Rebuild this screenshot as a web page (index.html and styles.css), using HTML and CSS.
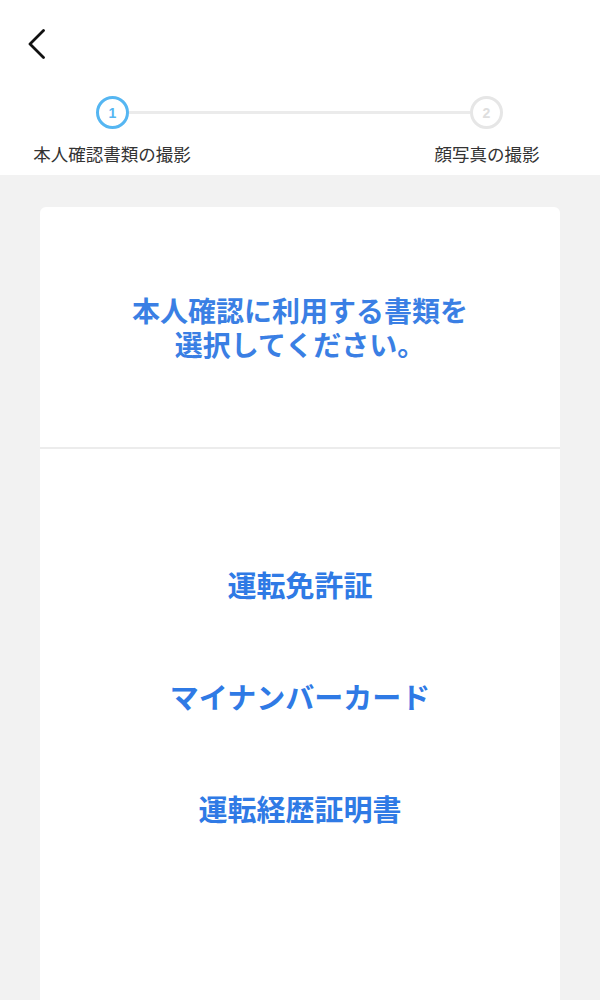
FILE: index.html
```html
<!DOCTYPE html>
<html lang="ja">
<head>
<meta charset="utf-8">
<title>本人確認書類の選択</title>
<link rel="stylesheet" href="styles.css">
</head>
<body>
<header class="header">
  <div class="back">
    <svg width="18" height="30" viewBox="0 0 18 30" aria-hidden="true">
      <polyline points="15.5,1.5 2,15 15.5,28.5" fill="none" stroke="#111" stroke-width="2.8" stroke-linecap="round" stroke-linejoin="round"/>
    </svg>
  </div>
  <div class="stepper">
    <div class="circle active">1</div>
    <div class="line"></div>
    <div class="circle">2</div>
  </div>
  <div class="labels">
    <span class="label">本人確認書類の撮影</span>
    <span class="label">顔写真の撮影</span>
  </div>
</header>
<main class="content">
  <section class="card">
    <div class="card-head">
      <h1 class="title"><span class="title-line">本人確認に利用する書類を</span><span class="title-line">選択してください。</span></h1>
    </div>
    <ul class="options">
      <li class="option">運転免許証</li>
      <li class="option">マイナンバーカード</li>
      <li class="option">運転経歴証明書</li>
    </ul>
  </section>
</main>
</body>
</html>
```

FILE: styles.css
```css
* { box-sizing: border-box; }
html, body {
  margin: 0;
  padding: 0;
  background: #f2f2f2;
  font-family: "Noto Sans CJK JP", "Noto Sans", sans-serif;
}
.header {
  background: #ffffff;
  height: 175px;
  padding-top: 29px;
}
.back {
  padding-left: 28px;
  height: 30px;
  display: flex;
  align-items: center;
}
.back svg { display: block; }
.stepper {
  display: flex;
  align-items: center;
  padding: 0 97px 0 96px;
  margin-top: 37px;
}
.circle {
  width: 33px;
  height: 33px;
  border-radius: 50%;
  border: 3px solid #e6e6e6;
  color: #dedede;
  font-family: "Liberation Sans", Arial, sans-serif;
  font-weight: 700;
  font-size: 14px;
  display: flex;
  align-items: center;
  justify-content: center;
  flex: none;
}
.circle.active {
  border-color: #55b6f2;
  color: #55b6f2;
}
.line {
  flex: 1;
  height: 3px;
  background: #ebebeb;
}
.labels {
  display: flex;
  justify-content: space-between;
  padding: 0 38px 0 37px;
  margin-top: 13px;
}
.label {
  width: 160px;
  margin: 0 -5px;
  text-align: center;
  font-size: 17.5px;
  line-height: 24px;
  color: #333333;
  white-space: nowrap;
}
.content {
  padding: 32px 40px 0;
}
.card {
  background: #ffffff;
  border-radius: 6px;
  min-height: 820px;
}
.card-head {
  height: 242px;
  border-bottom: 2px solid #ececec;
  display: flex;
  align-items: center;
  justify-content: center;
}
.title {
  margin: 0;
  text-align: center;
  font-size: 28px;
  font-weight: 700;
  color: #3a7fe4;
  display: flex;
  flex-direction: column;
}
.title-line {
  display: block;
  line-height: 34px;
}
.options {
  list-style: none;
  margin: 0;
  padding: 79px 0 0;
}
.option {
  height: 112px;
  display: flex;
  align-items: center;
  justify-content: center;
  font-size: 29px;
  font-weight: 700;
  color: #2f7ae5;
}
```
